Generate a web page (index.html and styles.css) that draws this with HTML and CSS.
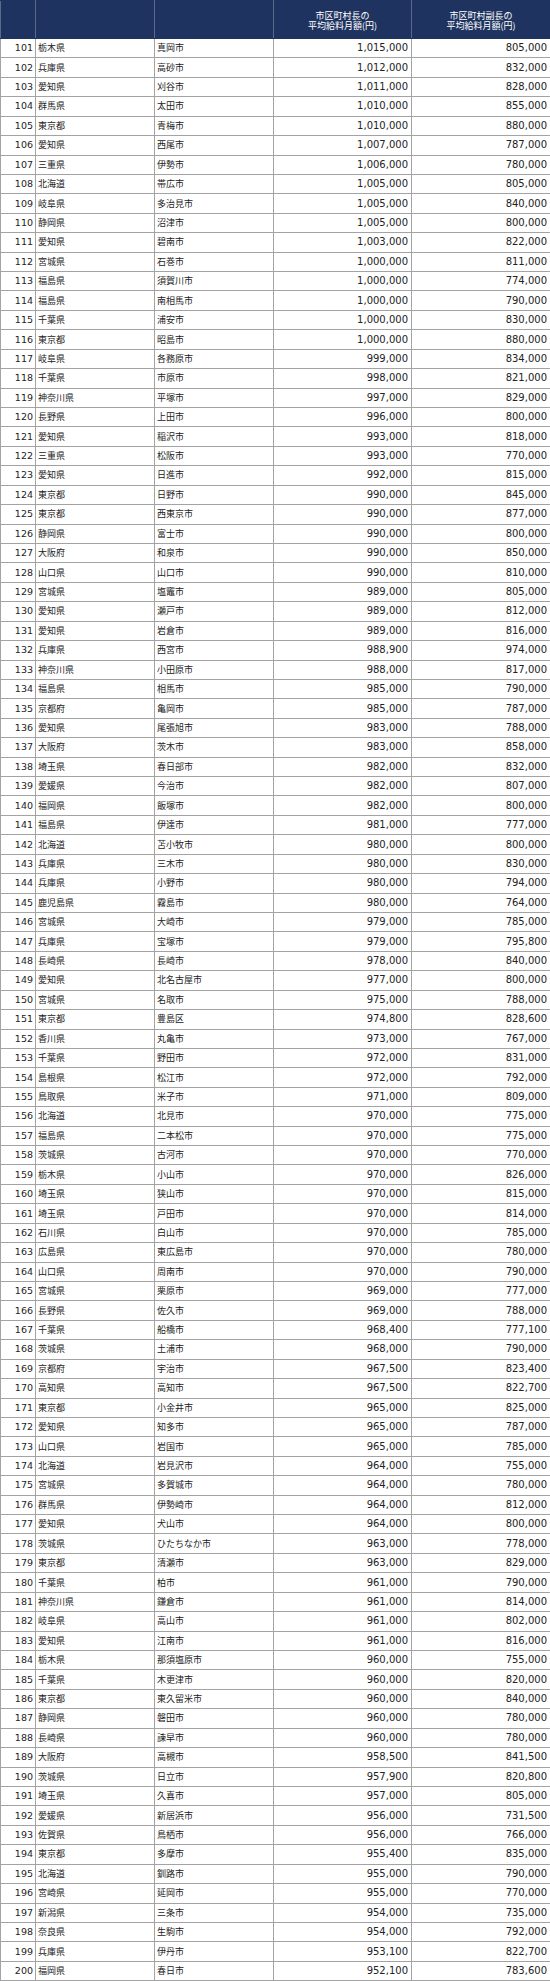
FILE: index.html
```html
<!DOCTYPE html>
<html lang="ja">
<head>
<meta charset="utf-8">
<title>市区町村長の平均給料月額</title>
<link rel="stylesheet" href="styles.css">
</head>
<body>
<table class="salary">
<colgroup><col class="c-rank"><col class="c-pref"><col class="c-city"><col class="c-mayor"><col class="c-deputy"></colgroup>
<thead>
<tr class="head"><th></th><th></th><th></th><th>市区町村長の<br>平均給料月額(円)</th><th>市区町村副長の<br>平均給料月額(円)</th></tr>
</thead>
<tbody>
<tr><td class="num">101</td><td>栃木県</td><td>真岡市</td><td class="num">1,015,000</td><td class="num">805,000</td></tr>
<tr><td class="num">102</td><td>兵庫県</td><td>高砂市</td><td class="num">1,012,000</td><td class="num">832,000</td></tr>
<tr><td class="num">103</td><td>愛知県</td><td>刈谷市</td><td class="num">1,011,000</td><td class="num">828,000</td></tr>
<tr><td class="num">104</td><td>群馬県</td><td>太田市</td><td class="num">1,010,000</td><td class="num">855,000</td></tr>
<tr><td class="num">105</td><td>東京都</td><td>青梅市</td><td class="num">1,010,000</td><td class="num">880,000</td></tr>
<tr><td class="num">106</td><td>愛知県</td><td>西尾市</td><td class="num">1,007,000</td><td class="num">787,000</td></tr>
<tr><td class="num">107</td><td>三重県</td><td>伊勢市</td><td class="num">1,006,000</td><td class="num">780,000</td></tr>
<tr><td class="num">108</td><td>北海道</td><td>帯広市</td><td class="num">1,005,000</td><td class="num">805,000</td></tr>
<tr><td class="num">109</td><td>岐阜県</td><td>多治見市</td><td class="num">1,005,000</td><td class="num">840,000</td></tr>
<tr><td class="num">110</td><td>静岡県</td><td>沼津市</td><td class="num">1,005,000</td><td class="num">800,000</td></tr>
<tr><td class="num">111</td><td>愛知県</td><td>碧南市</td><td class="num">1,003,000</td><td class="num">822,000</td></tr>
<tr><td class="num">112</td><td>宮城県</td><td>石巻市</td><td class="num">1,000,000</td><td class="num">811,000</td></tr>
<tr><td class="num">113</td><td>福島県</td><td>須賀川市</td><td class="num">1,000,000</td><td class="num">774,000</td></tr>
<tr><td class="num">114</td><td>福島県</td><td>南相馬市</td><td class="num">1,000,000</td><td class="num">790,000</td></tr>
<tr><td class="num">115</td><td>千葉県</td><td>浦安市</td><td class="num">1,000,000</td><td class="num">830,000</td></tr>
<tr><td class="num">116</td><td>東京都</td><td>昭島市</td><td class="num">1,000,000</td><td class="num">880,000</td></tr>
<tr><td class="num">117</td><td>岐阜県</td><td>各務原市</td><td class="num">999,000</td><td class="num">834,000</td></tr>
<tr><td class="num">118</td><td>千葉県</td><td>市原市</td><td class="num">998,000</td><td class="num">821,000</td></tr>
<tr><td class="num">119</td><td>神奈川県</td><td>平塚市</td><td class="num">997,000</td><td class="num">829,000</td></tr>
<tr><td class="num">120</td><td>長野県</td><td>上田市</td><td class="num">996,000</td><td class="num">800,000</td></tr>
<tr><td class="num">121</td><td>愛知県</td><td>稲沢市</td><td class="num">993,000</td><td class="num">818,000</td></tr>
<tr><td class="num">122</td><td>三重県</td><td>松阪市</td><td class="num">993,000</td><td class="num">770,000</td></tr>
<tr><td class="num">123</td><td>愛知県</td><td>日進市</td><td class="num">992,000</td><td class="num">815,000</td></tr>
<tr><td class="num">124</td><td>東京都</td><td>日野市</td><td class="num">990,000</td><td class="num">845,000</td></tr>
<tr><td class="num">125</td><td>東京都</td><td>西東京市</td><td class="num">990,000</td><td class="num">877,000</td></tr>
<tr><td class="num">126</td><td>静岡県</td><td>富士市</td><td class="num">990,000</td><td class="num">800,000</td></tr>
<tr><td class="num">127</td><td>大阪府</td><td>和泉市</td><td class="num">990,000</td><td class="num">850,000</td></tr>
<tr><td class="num">128</td><td>山口県</td><td>山口市</td><td class="num">990,000</td><td class="num">810,000</td></tr>
<tr><td class="num">129</td><td>宮城県</td><td>塩竈市</td><td class="num">989,000</td><td class="num">805,000</td></tr>
<tr><td class="num">130</td><td>愛知県</td><td>瀬戸市</td><td class="num">989,000</td><td class="num">812,000</td></tr>
<tr><td class="num">131</td><td>愛知県</td><td>岩倉市</td><td class="num">989,000</td><td class="num">816,000</td></tr>
<tr><td class="num">132</td><td>兵庫県</td><td>西宮市</td><td class="num">988,900</td><td class="num">974,000</td></tr>
<tr><td class="num">133</td><td>神奈川県</td><td>小田原市</td><td class="num">988,000</td><td class="num">817,000</td></tr>
<tr><td class="num">134</td><td>福島県</td><td>相馬市</td><td class="num">985,000</td><td class="num">790,000</td></tr>
<tr><td class="num">135</td><td>京都府</td><td>亀岡市</td><td class="num">985,000</td><td class="num">787,000</td></tr>
<tr><td class="num">136</td><td>愛知県</td><td>尾張旭市</td><td class="num">983,000</td><td class="num">788,000</td></tr>
<tr><td class="num">137</td><td>大阪府</td><td>茨木市</td><td class="num">983,000</td><td class="num">858,000</td></tr>
<tr><td class="num">138</td><td>埼玉県</td><td>春日部市</td><td class="num">982,000</td><td class="num">832,000</td></tr>
<tr><td class="num">139</td><td>愛媛県</td><td>今治市</td><td class="num">982,000</td><td class="num">807,000</td></tr>
<tr><td class="num">140</td><td>福岡県</td><td>飯塚市</td><td class="num">982,000</td><td class="num">800,000</td></tr>
<tr><td class="num">141</td><td>福島県</td><td>伊達市</td><td class="num">981,000</td><td class="num">777,000</td></tr>
<tr><td class="num">142</td><td>北海道</td><td>苫小牧市</td><td class="num">980,000</td><td class="num">800,000</td></tr>
<tr><td class="num">143</td><td>兵庫県</td><td>三木市</td><td class="num">980,000</td><td class="num">830,000</td></tr>
<tr><td class="num">144</td><td>兵庫県</td><td>小野市</td><td class="num">980,000</td><td class="num">794,000</td></tr>
<tr><td class="num">145</td><td>鹿児島県</td><td>霧島市</td><td class="num">980,000</td><td class="num">764,000</td></tr>
<tr><td class="num">146</td><td>宮城県</td><td>大崎市</td><td class="num">979,000</td><td class="num">785,000</td></tr>
<tr><td class="num">147</td><td>兵庫県</td><td>宝塚市</td><td class="num">979,000</td><td class="num">795,800</td></tr>
<tr><td class="num">148</td><td>長崎県</td><td>長崎市</td><td class="num">978,000</td><td class="num">840,000</td></tr>
<tr><td class="num">149</td><td>愛知県</td><td>北名古屋市</td><td class="num">977,000</td><td class="num">800,000</td></tr>
<tr><td class="num">150</td><td>宮城県</td><td>名取市</td><td class="num">975,000</td><td class="num">788,000</td></tr>
<tr><td class="num">151</td><td>東京都</td><td>豊島区</td><td class="num">974,800</td><td class="num">828,600</td></tr>
<tr><td class="num">152</td><td>香川県</td><td>丸亀市</td><td class="num">973,000</td><td class="num">767,000</td></tr>
<tr><td class="num">153</td><td>千葉県</td><td>野田市</td><td class="num">972,000</td><td class="num">831,000</td></tr>
<tr><td class="num">154</td><td>島根県</td><td>松江市</td><td class="num">972,000</td><td class="num">792,000</td></tr>
<tr><td class="num">155</td><td>鳥取県</td><td>米子市</td><td class="num">971,000</td><td class="num">809,000</td></tr>
<tr><td class="num">156</td><td>北海道</td><td>北見市</td><td class="num">970,000</td><td class="num">775,000</td></tr>
<tr><td class="num">157</td><td>福島県</td><td>二本松市</td><td class="num">970,000</td><td class="num">775,000</td></tr>
<tr><td class="num">158</td><td>茨城県</td><td>古河市</td><td class="num">970,000</td><td class="num">770,000</td></tr>
<tr><td class="num">159</td><td>栃木県</td><td>小山市</td><td class="num">970,000</td><td class="num">826,000</td></tr>
<tr><td class="num">160</td><td>埼玉県</td><td>狭山市</td><td class="num">970,000</td><td class="num">815,000</td></tr>
<tr><td class="num">161</td><td>埼玉県</td><td>戸田市</td><td class="num">970,000</td><td class="num">814,000</td></tr>
<tr><td class="num">162</td><td>石川県</td><td>白山市</td><td class="num">970,000</td><td class="num">785,000</td></tr>
<tr><td class="num">163</td><td>広島県</td><td>東広島市</td><td class="num">970,000</td><td class="num">780,000</td></tr>
<tr><td class="num">164</td><td>山口県</td><td>周南市</td><td class="num">970,000</td><td class="num">790,000</td></tr>
<tr><td class="num">165</td><td>宮城県</td><td>栗原市</td><td class="num">969,000</td><td class="num">777,000</td></tr>
<tr><td class="num">166</td><td>長野県</td><td>佐久市</td><td class="num">969,000</td><td class="num">788,000</td></tr>
<tr><td class="num">167</td><td>千葉県</td><td>船橋市</td><td class="num">968,400</td><td class="num">777,100</td></tr>
<tr><td class="num">168</td><td>茨城県</td><td>土浦市</td><td class="num">968,000</td><td class="num">790,000</td></tr>
<tr><td class="num">169</td><td>京都府</td><td>宇治市</td><td class="num">967,500</td><td class="num">823,400</td></tr>
<tr><td class="num">170</td><td>高知県</td><td>高知市</td><td class="num">967,500</td><td class="num">822,700</td></tr>
<tr><td class="num">171</td><td>東京都</td><td>小金井市</td><td class="num">965,000</td><td class="num">825,000</td></tr>
<tr><td class="num">172</td><td>愛知県</td><td>知多市</td><td class="num">965,000</td><td class="num">787,000</td></tr>
<tr><td class="num">173</td><td>山口県</td><td>岩国市</td><td class="num">965,000</td><td class="num">785,000</td></tr>
<tr><td class="num">174</td><td>北海道</td><td>岩見沢市</td><td class="num">964,000</td><td class="num">755,000</td></tr>
<tr><td class="num">175</td><td>宮城県</td><td>多賀城市</td><td class="num">964,000</td><td class="num">780,000</td></tr>
<tr><td class="num">176</td><td>群馬県</td><td>伊勢崎市</td><td class="num">964,000</td><td class="num">812,000</td></tr>
<tr><td class="num">177</td><td>愛知県</td><td>犬山市</td><td class="num">964,000</td><td class="num">800,000</td></tr>
<tr><td class="num">178</td><td>茨城県</td><td>ひたちなか市</td><td class="num">963,000</td><td class="num">778,000</td></tr>
<tr><td class="num">179</td><td>東京都</td><td>清瀬市</td><td class="num">963,000</td><td class="num">829,000</td></tr>
<tr><td class="num">180</td><td>千葉県</td><td>柏市</td><td class="num">961,000</td><td class="num">790,000</td></tr>
<tr><td class="num">181</td><td>神奈川県</td><td>鎌倉市</td><td class="num">961,000</td><td class="num">814,000</td></tr>
<tr><td class="num">182</td><td>岐阜県</td><td>高山市</td><td class="num">961,000</td><td class="num">802,000</td></tr>
<tr><td class="num">183</td><td>愛知県</td><td>江南市</td><td class="num">961,000</td><td class="num">816,000</td></tr>
<tr><td class="num">184</td><td>栃木県</td><td>那須塩原市</td><td class="num">960,000</td><td class="num">755,000</td></tr>
<tr><td class="num">185</td><td>千葉県</td><td>木更津市</td><td class="num">960,000</td><td class="num">820,000</td></tr>
<tr><td class="num">186</td><td>東京都</td><td>東久留米市</td><td class="num">960,000</td><td class="num">840,000</td></tr>
<tr><td class="num">187</td><td>静岡県</td><td>磐田市</td><td class="num">960,000</td><td class="num">780,000</td></tr>
<tr><td class="num">188</td><td>長崎県</td><td>諫早市</td><td class="num">960,000</td><td class="num">780,000</td></tr>
<tr><td class="num">189</td><td>大阪府</td><td>高槻市</td><td class="num">958,500</td><td class="num">841,500</td></tr>
<tr><td class="num">190</td><td>茨城県</td><td>日立市</td><td class="num">957,900</td><td class="num">820,800</td></tr>
<tr><td class="num">191</td><td>埼玉県</td><td>久喜市</td><td class="num">957,000</td><td class="num">805,000</td></tr>
<tr><td class="num">192</td><td>愛媛県</td><td>新居浜市</td><td class="num">956,000</td><td class="num">731,500</td></tr>
<tr><td class="num">193</td><td>佐賀県</td><td>鳥栖市</td><td class="num">956,000</td><td class="num">766,000</td></tr>
<tr><td class="num">194</td><td>東京都</td><td>多摩市</td><td class="num">955,400</td><td class="num">835,000</td></tr>
<tr><td class="num">195</td><td>北海道</td><td>釧路市</td><td class="num">955,000</td><td class="num">790,000</td></tr>
<tr><td class="num">196</td><td>宮崎県</td><td>延岡市</td><td class="num">955,000</td><td class="num">770,000</td></tr>
<tr><td class="num">197</td><td>新潟県</td><td>三条市</td><td class="num">954,000</td><td class="num">735,000</td></tr>
<tr><td class="num">198</td><td>奈良県</td><td>生駒市</td><td class="num">954,000</td><td class="num">792,000</td></tr>
<tr><td class="num">199</td><td>兵庫県</td><td>伊丹市</td><td class="num">953,100</td><td class="num">822,700</td></tr>
<tr><td class="num">200</td><td>福岡県</td><td>春日市</td><td class="num">952,100</td><td class="num">783,600</td></tr>
</tbody>
</table>
</body>
</html>
```

FILE: styles.css
```css
html, body {
  margin: 0;
  padding: 0;
  background: #ffffff;
}

body {
  font-family: "Noto Sans CJK JP", "Noto Sans", sans-serif;
  color: #222222;
}

.salary {
  width: 550px;
  table-layout: fixed;
  border-collapse: collapse;
  border-spacing: 0;
}

.c-rank { width: 35px; }
.c-pref { width: 119px; }
.c-city { width: 119px; }
.c-mayor { width: 138px; }
.c-deputy { width: 139px; }

.salary th,
.salary td {
  border: 1px solid #a3a3a3;
  padding: 0 2px;
  overflow: hidden;
  white-space: nowrap;
}

.head {
  height: 38px;
}

.salary th {
  background: #1e335f;
  border-color: #1e335f #5a6a8a;
  color: #ffffff;
  font-weight: normal;
  font-size: 9px;
  line-height: 10px;
  text-align: center;
  vertical-align: middle;
  padding-top: 2px;
}

.salary tbody tr {
  height: 19.43px;
}

.salary td {
  font-size: 9px;
  line-height: 12px;
  padding: 0 2px 0 2px;
  vertical-align: middle;
}

.salary td.num {
  font-family: "DejaVu Sans", "Noto Sans", sans-serif;
  font-size: 10px;
  text-align: right;
  padding-right: 3px;
}

.salary td:first-child.num {
  font-size: 9.5px;
  padding-right: 2px;
}
```
